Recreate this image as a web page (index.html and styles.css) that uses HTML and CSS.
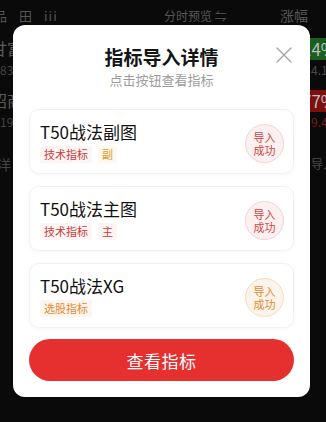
FILE: index.html
```html
<!DOCTYPE html>
<html lang="zh">
<head>
<meta charset="utf-8">
<link rel="stylesheet" href="styles.css">
</head>
<body>
<div class="screen">
  <div class="backdrop">
    <div class="bg-head">
      <div class="bg-head-left"><span>品</span><span>田</span><span>iii</span></div>
      <div class="bg-head-mid">分时预览 ⇋</div>
      <div class="bg-head-right">涨幅</div>
    </div>
    <div class="bg-row">
      <div class="bg-left"><div class="bg-name">甘富</div><div class="bg-code">83</div></div>
      <div class="bg-right"><div class="bg-chip green">14%</div><div class="bg-sub">4.1</div></div>
    </div>
    <div class="bg-row">
      <div class="bg-left"><div class="bg-name">招商</div><div class="bg-code">19</div></div>
      <div class="bg-right"><div class="bg-chip red">77%</div><div class="bg-sub redtext">9.4</div></div>
    </div>
    <div class="bg-row short">
      <div class="bg-left"><div class="bg-name dim">洋</div></div>
      <div class="bg-right"><div class="bg-sub">导入</div></div>
    </div>
  </div>

  <div class="modal">
    <div class="modal-head">
      <div class="modal-title">指标导入详情</div>
      <div class="modal-sub">点击按钮查看指标</div>
      <div class="modal-close">
        <svg width="16" height="16" viewBox="0 0 16 16"><path d="M1 1L15 15M15 1L1 15" stroke="#a3a3a3" stroke-width="1.4" fill="none" stroke-linecap="round"/></svg>
      </div>
    </div>
    <div class="cards">
      <div class="card">
        <div class="card-main">
          <div class="card-title">T50战法副图</div>
          <div class="tags"><span class="tag tag-red">技术指标</span><span class="tag tag-gold">副</span></div>
        </div>
        <div class="badge badge-red"><span>导入</span><span>成功</span></div>
      </div>
      <div class="card">
        <div class="card-main">
          <div class="card-title">T50战法主图</div>
          <div class="tags"><span class="tag tag-red">技术指标</span><span class="tag tag-red">主</span></div>
        </div>
        <div class="badge badge-red"><span>导入</span><span>成功</span></div>
      </div>
      <div class="card">
        <div class="card-main">
          <div class="card-title">T50战法XG</div>
          <div class="tags"><span class="tag tag-orange">选股指标</span></div>
        </div>
        <div class="badge badge-orange"><span>导入</span><span>成功</span></div>
      </div>
    </div>
    <div class="btn">查看指标</div>
  </div>
</div>
</body>
</html>
```
FILE: styles.css
```css
* { box-sizing: border-box; margin: 0; padding: 0; }
html, body { background: #0a0a0a; }
body {
  width: 326px;
  height: 422px;
  overflow: hidden;
  font-family: "Noto Sans CJK SC", "Noto Sans", sans-serif;
}
.screen { position: relative; width: 326px; height: 422px; overflow: hidden; }

.backdrop { width: 326px; height: 422px; color: #4d4d4d; }
.bg-head {
  height: 30px;
  display: flex;
  align-items: center;
  font-size: 12px;
}
.bg-head-left { display: flex; gap: 12px; margin-left: -6px; width: 170px; font-size: 13px; color: #555; }
.bg-head-left span:nth-child(3) { letter-spacing: 1px; }
.bg-head-mid { width: 116px; color: #575757; }
.bg-head-right { color: #575757; font-size: 14px; white-space: nowrap; }

.bg-row { height: 52px; display: flex; justify-content: space-between; padding-top: 8px; }
.bg-row.short { height: 50px; padding-top: 20px; }
.bg-left { margin-left: -9px; }
.bg-name { font-size: 16px; line-height: 20px; color: #5a5a5a; }
.bg-name.dim { font-size: 14px; margin-left: 6px; color: #444; }
.bg-code { font-size: 12px; line-height: 18px; color: #444; margin-left: 9px; margin-top: 3px; }
.bg-right { width: 24px; white-space: nowrap; }
.bg-chip {
  height: 22px;
  line-height: 22px;
  font-size: 17px;
  color: #bdbdbd;
  margin-left: -4px;
  width: 40px;
  text-indent: 4px;
  overflow: hidden;
}
.bg-chip.green { background: #1b5e20; }
.bg-chip.red { background: #7e0f0f; }
.bg-sub { font-size: 12px; line-height: 20px; margin-left: 9px; color: #4a4a4a; }
.bg-sub.redtext { color: #7a1c1c; }

.modal {
  position: absolute;
  left: 13px;
  top: 25px;
  width: 297px;
  height: 372px;
  background: #fff;
  border-radius: 12px;
  padding: 19px 16px 17px;
}
.modal-head { position: relative; text-align: center; }
.modal-title { font-size: 19px; line-height: 26px; font-weight: 700; color: #141414; }
.modal-sub { font-size: 13px; line-height: 18px; color: #9c9c9c; margin-top: 1px; }
.modal-close { position: absolute; right: 2px; top: 0; width: 16px; height: 16px; }

.cards { margin-top: 20px; display: flex; flex-direction: column; gap: 12px; }
.card {
  height: 65px;
  border: 1px solid #f1f1f1;
  border-radius: 10px;
  box-shadow: 0 1px 4px rgba(0,0,0,0.04);
  display: flex;
  align-items: center;
  justify-content: space-between;
  padding: 10px 9px 10px 10px;
}
.card-title { font-size: 17px; line-height: 23px; color: #111; }
.tags { display: flex; gap: 6px; margin-top: 3px; }
.tag { font-size: 11px; line-height: 17px; padding: 0 4px; border-radius: 2px; }
.tag-red { color: #cc3b3b; background: #fdf4f4; }
.tag-gold { color: #dc9c2c; background: #fdf8ee; }
.tag-orange { color: #e58a2e; background: #fdf6ee; }

.badge {
  width: 39px;
  height: 39px;
  border-radius: 50%;
  font-size: 11px;
  line-height: 13px;
  display: flex;
  flex-direction: column;
  align-items: center;
  justify-content: center;
  text-align: center;
  margin-top: 4px;
}
.badge span { display: block; height: 13px; }
.badge-red { background: #fcf0f0; border: 1px solid #f2d3d3; color: #d24646; }
.badge-orange { background: #fcf3ea; border: 1px solid #f3dcc4; color: #e38b2e; }

.btn {
  margin-top: 11px;
  height: 42px;
  border-radius: 21px;
  background: #e5302f;
  color: #fff;
  font-size: 17px;
  display: flex;
  align-items: center;
  justify-content: center;
  letter-spacing: 0.5px;
}
```
